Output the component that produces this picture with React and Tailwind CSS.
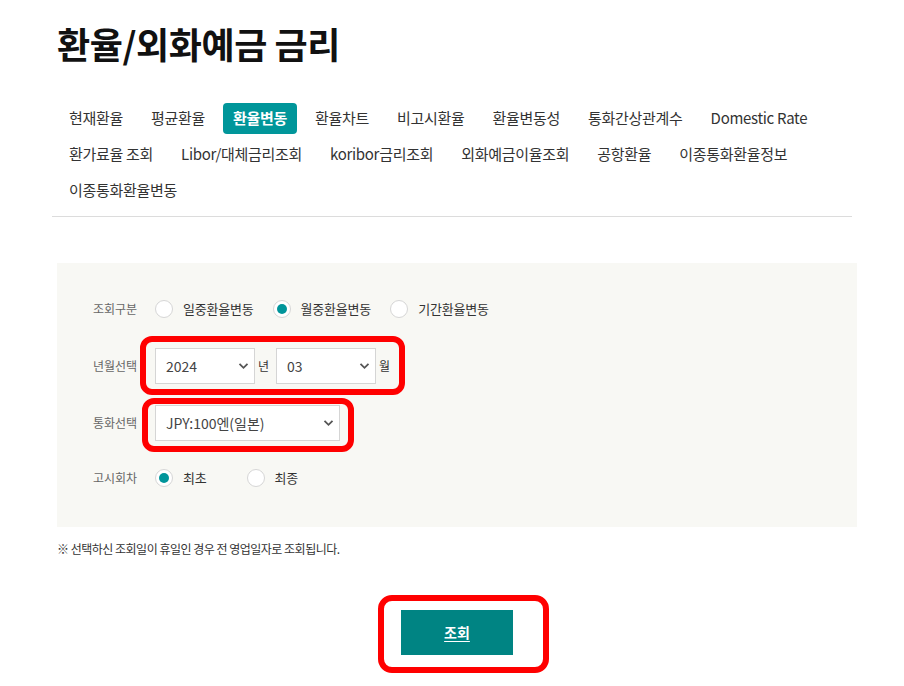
import { useState } from "react";

const tabs = [
    "현재환율",
    "평균환율",
    "환율변동",
    "환율차트",
    "비고시환율",
    "환율변동성",
    "통화간상관계수",
    "Domestic Rate",
    "환가료율 조회",
    "Libor/대체금리조회",
    "koribor금리조회",
    "외화예금이율조회",
    "공항환율",
    "이종통화환율정보",
    "이종통화환율변동",
];

const Radio = ({ checked, label, onClick }) => {
    return (
        <button type="button" onClick={onClick} className="flex items-center gap-[10px] cursor-pointer">
            <span className="w-[18px] h-[18px] rounded-full border border-[#d6d6d6] bg-white flex items-center justify-center">
                {checked && <span className="w-[10px] h-[10px] rounded-full bg-[#00959a]" />}
            </span>
            <span className="text-[13px] text-[#333] tracking-[-0.2px]">{label}</span>
        </button>
    );
};

const Select = ({ value, options, width, onChange }) => {
    return (
        <div className={`relative ${width} h-[36px]`}>
            <select
                value={value}
                onChange={(e) => onChange(e.target.value)}
                className="appearance-none w-full h-full border border-[#d5d5d5] bg-white pl-[10px] pr-[28px] text-[14px] text-[#444] outline-none"
            >
                {options.map((o) => (
                    <option key={o} value={o}>{o}</option>
                ))}
            </select>
            {/* chevron */}
            <svg className="absolute right-[6px] top-[14px] pointer-events-none" width="11" height="8" viewBox="0 0 11 8">
                <path d="M1.5 1.8 L5.5 5.8 L9.5 1.8" fill="none" stroke="#555" strokeWidth="1.8" />
            </svg>
        </div>
    );
};

const App = () => {
    const [kind, setKind] = useState(1);
    const [round, setRound] = useState(0);
    const [year, setYear] = useState("2024");
    const [month, setMonth] = useState("03");
    const [cur, setCur] = useState("JPY:100엔(일본)");

    return (
        <div className="w-[904px] min-h-[686px] bg-white font-['Noto_Sans_CJK_KR',_'Noto_Sans',sans-serif] text-[#333]">
            <div className="pl-[52px] w-[852px]">
                {/* Title */}
                <h1 className="pt-[18px] pl-[5px] h-[68px] leading-[50px] text-[36px] font-bold text-[#111] tracking-[-0.4px]">
                    환율/외화예금 금리
                </h1>

                {/* Tabs */}
                <div className="mt-[35px] pl-[7px] pb-[10px] border-b border-[#dcdcdc] flex flex-wrap gap-x-[8px] gap-y-[5px]">
                    {tabs.map((t) => (
                        <a
                            key={t}
                            href="#"
                            className={`h-[31px] px-[10px] flex items-center rounded-[4px] text-[15px] tracking-[-0.3px] whitespace-nowrap ${
                                t === "환율변동" ? "bg-[#00969a] text-white font-bold" : "text-[#333]"
                            }`}
                        >
                            {t}
                        </a>
                    ))}
                </div>
            </div>

            <div className="pl-[57px] w-[857px]">
                {/* Search form */}
                <div className="mt-[46px] bg-[#f8f8f4] pt-[28px] pb-[31px] pl-[36px] flex flex-col gap-[21px]">
                    <div className="flex items-center h-[36px]">
                        <span className="w-[62px] text-[12px] text-[#666]">조회구분</span>
                        <div className="flex items-center gap-[19px]">
                            <Radio checked={kind === 0} label="일중환율변동" onClick={() => setKind(0)} />
                            <Radio checked={kind === 1} label="월중환율변동" onClick={() => setKind(1)} />
                            <Radio checked={kind === 2} label="기간환율변동" onClick={() => setKind(2)} />
                        </div>
                    </div>

                    <div className="flex items-center h-[36px]">
                        <span className="w-[62px] text-[12px] text-[#666]">년월선택</span>
                        <div className="relative flex items-center">
                            <Select value={year} options={["2022", "2023", "2024"]} width="w-[100px]" onChange={setYear} />
                            <span className="ml-[3px] mr-[7px] text-[12px] text-[#333]">년</span>
                            <Select value={month} options={["01", "02", "03", "04"]} width="w-[100px]" onChange={setMonth} />
                            <span className="ml-[3px] text-[12px] text-[#333]">월</span>
                            {/* highlight */}
                            <span className="absolute left-[-15px] right-[-15px] top-[-12px] bottom-[-11px] border-[6px] border-[#ff0000] rounded-[12px] pointer-events-none" />
                        </div>
                    </div>

                    <div className="flex items-center h-[36px]">
                        <span className="w-[62px] text-[12px] text-[#666]">통화선택</span>
                        <div className="relative">
                            <Select value={cur} options={["USD:미국달러", "JPY:100엔(일본)", "EUR:유로"]} width="w-[185px]" onChange={setCur} />
                            <span className="absolute left-[-13px] right-[-14px] top-[-7px] bottom-[-11px] border-[6px] border-[#ff0000] rounded-[12px] pointer-events-none" />
                        </div>
                    </div>

                    <div className="flex items-center h-[36px] -mt-[2px]">
                        <span className="w-[62px] text-[12px] text-[#666]">고시회차</span>
                        <div className="flex items-center gap-[40px]">
                            <Radio checked={round === 0} label="최초" onClick={() => setRound(0)} />
                            <Radio checked={round === 1} label="최종" onClick={() => setRound(1)} />
                        </div>
                    </div>
                </div>

                {/* Notice */}
                <p className="mt-[15px] text-[12px] leading-[14px] text-[#333] tracking-[-0.5px]">
                    ※ 선택하신 조회일이 휴일인 경우 전 영업일자로 조회됩니다.
                </p>

                {/* Submit */}
                <div className="flex justify-center mt-[54px]">
                    <div className="relative">
                        <button type="button" className="w-[112px] h-[45px] bg-[#008483] text-white text-[14px] font-bold underline underline-offset-[3px]">
                            조회
                        </button>
                        <span className="absolute left-[-23px] right-[-36px] top-[-15px] bottom-[-18px] border-[6px] border-[#ff0000] rounded-[14px] pointer-events-none" />
                    </div>
                </div>
            </div>
        </div>
    );
};

export default App;
